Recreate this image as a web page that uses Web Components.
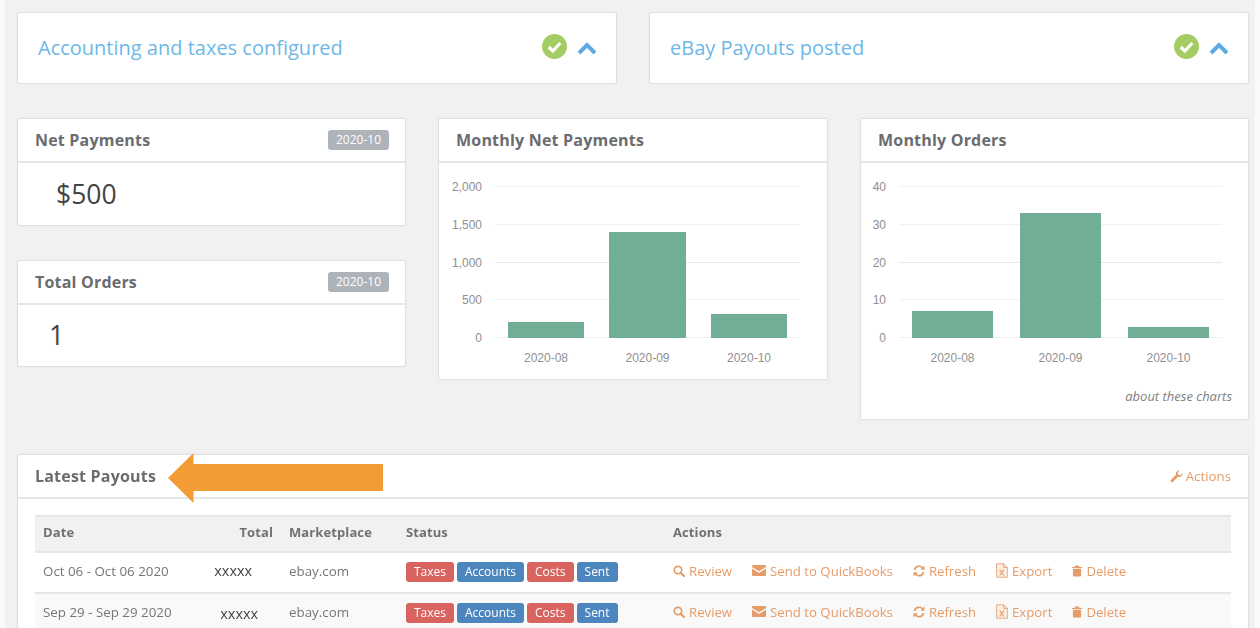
<!DOCTYPE html>
<html>
<head>
<meta charset="utf-8">
<title>Dashboard</title>
<style>
  html, body { margin: 0; height: 100%; overflow: hidden; background: #fafafa; }
  body { font-family: "Open Sans", "Liberation Sans", sans-serif; }
</style>
</head>
<body>
<dash-page></dash-page>

<script>
(function() {
  const ICONS = {
    search: '<svg width="12" height="12" viewBox="0 0 12 12"><circle cx="5" cy="5" r="3.7" fill="none" stroke="currentColor" stroke-width="1.7"/><path d="M7.8 7.8L11 11" stroke="currentColor" stroke-width="2.1" stroke-linecap="round"/></svg>',
    mail: '<svg width="14" height="11" viewBox="0 0 14 11"><path fill="currentColor" d="M1 0h12a1 1 0 0 1 1 1v1L7 6.3 0 2V1a1 1 0 0 1 1-1zM0 3.6l7 4.3 7-4.3V10a1 1 0 0 1-1 1H1a1 1 0 0 1-1-1z"/></svg>',
    refresh: '<svg width="12" height="12" viewBox="0 0 12 12"><path fill="none" stroke="currentColor" stroke-width="1.7" d="M1.500 5A4.600 4.600 0 0 1 9.600 3M10.500 7A4.600 4.600 0 0 1 2.400 9"/><path fill="currentColor" d="M11.500 .6v4.200H7.300zM.5 11.400V7.200h4.200z"/></svg>',
    file: '<svg width="12" height="15" viewBox="0 0 13 16"><path fill="#fbeee4" stroke="currentColor" stroke-width=".9" d="M.7.7h7.600l4 4v10.600H.7z"/><path fill="none" stroke="currentColor" stroke-width=".9" d="M8.300.7v4h4"/><path fill="none" stroke="currentColor" stroke-width="1.200" d="M4 7l4.600 6.400M8.600 7L4 13.400"/></svg>',
    trash: '<svg width="10" height="12" viewBox="0 0 11 12"><path fill="currentColor" d="M3.600 0h3.800l.8 1.600H11v1.200H0V1.600h2.800zM1 3.600h9V11a1 1 0 0 1-1 1H2a1 1 0 0 1-1-1z"/></svg>',
    wrench: '<svg width="13" height="13" viewBox="0 0 14 14"><path fill="currentColor" d="M13.700 3.200a3.900 3.900 0 0 1-5.100 4.100L3 12.900a1.500 1.500 0 0 1-2.100-2.100L6.500 5.200A3.900 3.900 0 0 1 10.600.3L8.300 2.600l.5 2.500 2.500.5z"/></svg>'
  };

  class SetupCard extends HTMLElement {
    constructor() {
      super();
      this.attachShadow({ mode: 'open' });
      this.shadowRoot.innerHTML = `
        <style>
          :host { display: flex; align-items: center; justify-content: space-between; height: 72px; box-sizing: border-box;
            background: #fff; border: 1px solid #dfdfdf; border-radius: 2px; padding: 0 19px 0 20px; box-shadow: 0 0 2px rgba(0,0,0,.06); }
          .title { font-size: 20px; color: #6db8e8; margin-top: -2px; }
          .icons { display: flex; align-items: center; gap: 10px; margin-top: -4px; }
          svg { display: block; }
          .chev { margin-top: 4px; }
        </style>
        <div class="title"><slot></slot></div>
        <div class="icons">
          <svg width="25" height="25" viewBox="0 0 25 25"><circle cx="12.500" cy="12.500" r="12.500" fill="#a3cc62"/><path d="M6.800 13l4 4 7.500-8" fill="none" stroke="#fff" stroke-width="3.200"/></svg>
          <svg class="chev" width="20" height="13" viewBox="0 0 20 13"><path d="M2 11l8-8 8 8" fill="none" stroke="#5cabe3" stroke-width="4"/></svg>
        </div>`;
    }
  }

  class PanelCard extends HTMLElement {
    constructor() {
      super();
      this.attachShadow({ mode: 'open' });
      this.shadowRoot.innerHTML = `
        <style>
          :host { display: block; background: #fff; border: 1px solid #dfdfdf; border-radius: 2px; box-sizing: border-box; box-shadow: 0 0 2px rgba(0,0,0,.06); }
          header { display: flex; align-items: center; justify-content: space-between; height: 44px; box-sizing: border-box;
            padding: 0 16px 0 17px; border-bottom: 2px solid #e6e6e8; }
          .title { font-size: 16px; letter-spacing: .2px; font-weight: 700; color: #6a6c70; }
        </style>
        <header>
          <div class="title"><slot name="title"></slot></div>
          <slot name="right"></slot>
        </header>
        <slot></slot>`;
    }
  }

  class MonthBadge extends HTMLElement {
    constructor() {
      super();
      this.attachShadow({ mode: 'open' });
      this.shadowRoot.innerHTML = `
        <style>
          :host { display: block; background: #aeb3ba; color: #fff; font-size: 12px; line-height: 20px; padding: 0 8px; border-radius: 3px; }
        </style>
        <slot></slot>`;
    }
  }

  class StatValue extends HTMLElement {
    constructor() {
      super();
      this.attachShadow({ mode: 'open' });
      this.shadowRoot.innerHTML = `
        <style>
          :host { display: flex; align-items: center; height: 62px; font-size: 26.5px; color: #444; }
        </style>
        <slot></slot>`;
    }
    connectedCallback() {
      this.style.paddingLeft = (this.getAttribute('indent') || 0) + 'px';
      this.style.marginTop = (this.getAttribute('lift') || 0) + 'px';
    }
  }

  class BarChart extends HTMLElement {
    constructor() {
      super();
      this.attachShadow({ mode: 'open' });
    }
    connectedCallback() {
      // ticks are pipe separated because the labels hold commas
      const ticks = this.getAttribute('ticks').split('|');
      const bars = JSON.parse(this.getAttribute('bars')); // [left, top, right]
      const x0 = +this.getAttribute('x0'), x1 = +this.getAttribute('x1');
      const labels = ['2020-08', '2020-09', '2020-10'];
      const ys = [23, 61, 99, 136, 174];
      let svg = '';
      ys.forEach((y, i) => {
        svg += `<line x1="${x0}" x2="${x1}" y1="${y}.5" y2="${y}.5" stroke="${i === 2 ? '#e5e6ea' : '#f0f1f3'}"/>`;
        svg += `<text x="${x0 - 13}" y="${y + 5}" text-anchor="end">${ticks[i]}</text>`;
      });
      bars.forEach((b, i) => {
        svg += `<rect x="${b[0]}" y="${b[1]}" width="${b[2] - b[0]}" height="${175 - b[1]}" fill="#72ad96"/>`;
        svg += `<text x="${(b[0] + b[2]) / 2}" y="199" text-anchor="middle">${labels[i]}</text>`;
      });
      this.shadowRoot.innerHTML = `
        <style>
          :host { display: block; }
          svg { display: block; }
          text { font: 12px "Liberation Sans", Arial, sans-serif; fill: #8f8f8f; }
        </style>
        <svg width="388" height="216" viewBox="0 0 388 216">${svg}</svg>`;
    }
  }

  class StatusLabel extends HTMLElement {
    constructor() {
      super();
      this.attachShadow({ mode: 'open' });
      this.shadowRoot.innerHTML = `
        <style>
          :host { display: block; color: #fff; font-size: 12px; line-height: 20px; padding: 0 8px; border-radius: 3px; background: #4d86bf; }
          :host([kind="red"]) { background: #d9635f; }
        </style>
        <slot></slot>`;
    }
  }

  class ActionLink extends HTMLElement {
    constructor() {
      super();
      this.attachShadow({ mode: 'open' });
    }
    connectedCallback() {
      this.shadowRoot.innerHTML = `
        <style>
          :host { display: inline-flex; align-items: center; color: #e59c68; font-size: 13.2px; white-space: nowrap; }
          .ic { display: flex; margin-right: 4px; }
        </style>
        <span class="ic">${ICONS[this.getAttribute('icon')]}</span><slot></slot>`;
    }
  }

  class PayoutsTable extends HTMLElement {
    constructor() {
      super();
      this.attachShadow({ mode: 'open' });
    }
    connectedCallback() {
      const rows = [
        ['Oct 06 - Oct 06 2020', 29, 4],
        ['Sep 29 - Sep 29 2020', 23, 0]
      ];
      const status = `<div class="labels">
          <status-label kind="red">Taxes</status-label><status-label>Accounts</status-label><status-label kind="red">Costs</status-label><status-label>Sent</status-label>
        </div>`;
      const actions = `<div class="acts">
          <action-link icon="search">Review</action-link>
          <action-link icon="mail">Send to QuickBooks</action-link>
          <action-link icon="refresh">Refresh</action-link>
          <action-link icon="file">Export</action-link>
          <action-link icon="trash">Delete</action-link>
        </div>`;
      const body = rows.map(r => `<tr>
          <td>${r[0]}</td>
          <td class="num" style="padding-right:${r[1]}px;padding-bottom:${r[2]}px"><span class="masked">xxxxx</span></td>
          <td>ebay.com</td>
          <td>${status}</td>
          <td>${actions}</td>
        </tr>`).join('');
      this.shadowRoot.innerHTML = `
        <style>
          :host { display: block; padding: 16px 17px 0; }
          table { width: 100%; border-collapse: collapse; table-layout: fixed; font-size: 13.35px; color: #767676; }
          th { text-align: left; font-weight: 700; font-size: 13px; letter-spacing: .1px; color: #6f7175; background: #f1f1f1; height: 36px; padding: 0 8px 4px;
            border-top: 2px solid #e6e6e8; border-bottom: 2px solid #e6e6e8; box-sizing: border-box; }
          td { height: 41px; padding: 0 8px 4px; border-bottom: 2px solid #e6e6e8; box-sizing: border-box; white-space: nowrap; }
          tr:nth-child(even) td { background: #f9f9f9; }
          .num, th.num { text-align: right; }
          .masked { color: #444; font-size: 14.4px; }
          .labels { display: flex; gap: 3px; margin-top: 2px; }
          .acts { display: flex; gap: 20px; }
        </style>
        <table>
          <colgroup><col style="width:160px"><col style="width:86px"><col style="width:117px"><col style="width:267px"><col></colgroup>
          <thead><tr><th>Date</th><th class="num">Total</th><th>Marketplace</th><th>Status</th><th>Actions</th></tr></thead>
          <tbody>${body}</tbody>
        </table>`;
    }
  }

  class DashPage extends HTMLElement {
    constructor() {
      super();
      this.attachShadow({ mode: 'open' });
      this.shadowRoot.innerHTML = `
        <style>
          :host { display: block; height: 100%; box-sizing: border-box; margin: 0 5px; padding: 12px 6px 0 12px; background: #f1f1f1; filter: blur(.5px); }
          .top { display: grid; grid-template-columns: 1fr 1fr; gap: 32px; margin-bottom: 34px; }
          .mid { display: grid; grid-template-columns: 389px 390px 389px; column-gap: 32px; align-items: start; margin-bottom: 34px; }
          .stack { display: flex; flex-direction: column; gap: 34px; }
          .note { font-size: 13px; font-style: italic; color: #808080; text-align: right; padding: 8px 16px 0 0; line-height: 18px; height: 40px; box-sizing: border-box; }
          .act { color: #e59c68; font-size: 13.3px; display: flex; align-items: center; gap: 3px; margin-right: 1px; }
          .act svg { display: block; }
          .latest { position: relative; }
          .arrow { position: absolute; left: 150px; top: -2px; display: block; }
        </style>
        <div class="top">
          <setup-card>Accounting and taxes configured</setup-card>
          <setup-card>eBay Payouts posted</setup-card>
        </div>
        <div class="mid">
          <div class="stack">
            <panel-card>
              <span slot="title">Net Payments</span>
              <month-badge slot="right">2020-10</month-badge>
              <stat-value indent="38">$500</stat-value>
            </panel-card>
            <panel-card>
              <span slot="title">Total Orders</span>
              <month-badge slot="right">2020-10</month-badge>
              <stat-value indent="31" lift="-1">1</stat-value>
            </panel-card>
          </div>
          <panel-card>
            <span slot="title">Monthly Net Payments</span>
            <bar-chart x0="56" x1="361" ticks="2,000|1,500|1,000|500|0" bars="[[69,159,145],[170,69,247],[272,151,348]]"></bar-chart>
          </panel-card>
          <panel-card>
            <span slot="title">Monthly Orders</span>
            <bar-chart x0="38" x1="361" ticks="40|30|20|10|0" bars="[[51,148,132],[159,50,240],[267,164,348]]"></bar-chart>
            <div class="note">about these charts</div>
          </panel-card>
        </div>
        <panel-card class="latest">
          <span slot="title">Latest Payouts</span>
          <div class="act" slot="right">${ICONS.wrench}Actions</div>
          <payouts-table></payouts-table>
          <svg class="arrow" width="215" height="50" viewBox="0 0 215 50"><path fill="#f39c36" d="M0 25L25.500 0V11H215V38H25.500V50z"/></svg>
        </panel-card>`;
    }
  }

  customElements.define('setup-card', SetupCard);
  customElements.define('panel-card', PanelCard);
  customElements.define('month-badge', MonthBadge);
  customElements.define('stat-value', StatValue);
  customElements.define('bar-chart', BarChart);
  customElements.define('status-label', StatusLabel);
  customElements.define('action-link', ActionLink);
  customElements.define('payouts-table', PayoutsTable);
  customElements.define('dash-page', DashPage);
})();
</script>
</body>
</html>
